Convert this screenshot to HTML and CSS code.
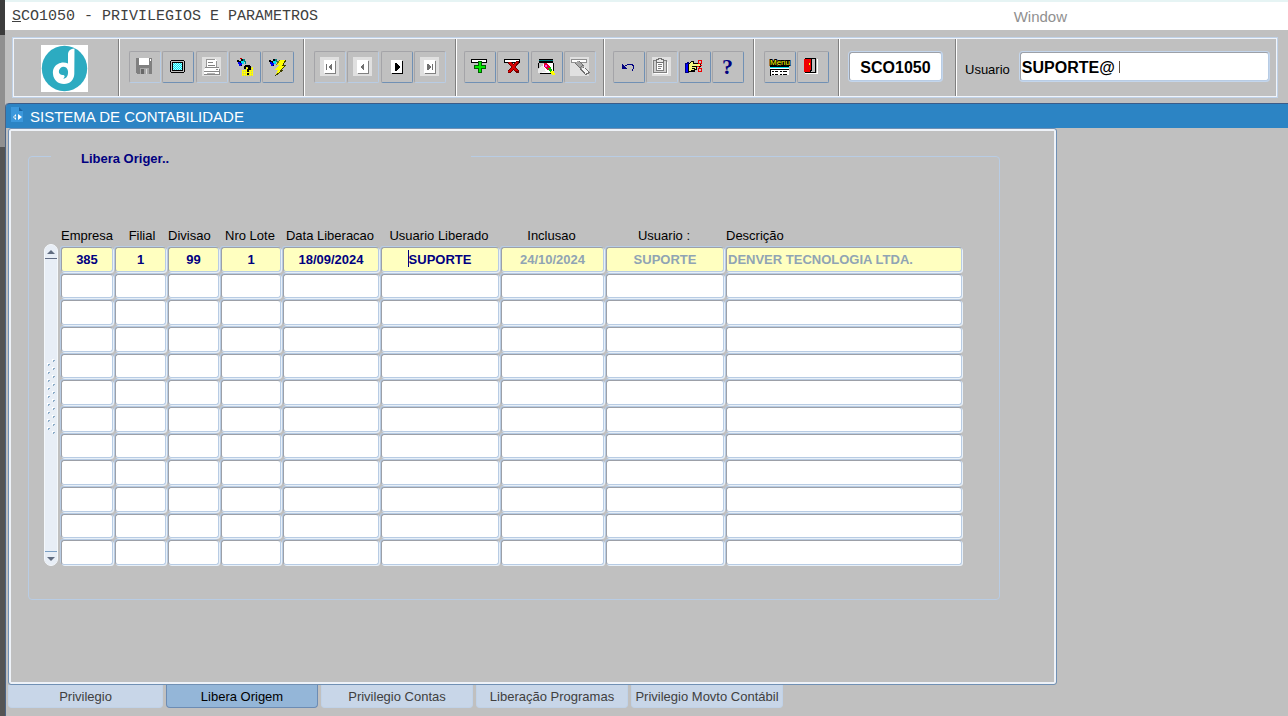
FILE: index.html
```html
<!DOCTYPE html>
<html lang="pt-BR">
  <head>
    <meta charset="utf-8">
    <title>SCO1050 - PRIVILEGIOS E PARAMETROS</title>
    <link rel="stylesheet" href="styles.css">
  </head>
  <body>
    <div class="edge"></div>
    <div class="page">
      <header class="menubar">
        <a class="menu-title" href="#"><u>S</u>CO1050 - PRIVILEGIOS E PARAMETROS</a>
        <a class="menu-window" href="#">Window</a>
      </header>

      <div class="toolbar">
        <div class="cell cell-logo">
          <svg class="logo" viewBox="0 0 47 47" role="img" aria-label="Denver">
            <rect width="47" height="47" fill="#fff"/>
            <circle cx="23.5" cy="23.5" r="22.7" fill="#2cabc1"/>
            <path d="M33.5 3.5 C28 4 27 7 27 10 V18.5 C24 17 20 17 17 19 C13 21 11.5 25 12 29 C12.5 35 17 39 23 39 C29 39 33 35 33.3 29 Z" fill="#fff"/>
            <path d="M27 26 C26.500 22 22 20.500 19.500 23 C16.500 26 18 30 21.500 30 C24 30 24.500 32 22 33.500 C25 34 27.500 31 27 26 Z" fill="#2cabc1"/>
          </svg>
        </div>

        <div class="cell group group-5">
          <button class="tool off" aria-label="Salvar">
            <svg viewBox="0 0 29 29">
              <path d="M6 5H22V21H7L6 20Z" fill="#808080"/>
              <path d="M9 5H19V12H9Z" fill="#fff"/>
              <path d="M20 6H21V8H20Z" fill="#fff"/>
              <path d="M10 15H19V21H10Z" fill="#a8a8a8"/>
              <path d="M11 16H14V21H11Z" fill="#686868"/>
              <path d="M16 16H17V21H16Z" fill="#d8d8d8"/>
            </svg>
          </button>
          <button class="tool" aria-label="Tela">
            <svg viewBox="0 0 29 29">
              <path d="M8 7H21V8H22V19H21V20H8V19H7V8H8Z" fill="#000"/>
              <path d="M8 8H21V19H8Z" fill="#c0c0c0"/>
              <path d="M9 9H20V18H9Z" fill="#000"/>
              <path d="M10 10H19V17H10Z" fill="#00e4f4"/>
              <path d="M10 10.500H19M10 12.500H19M10 14.500H19M10 16.500H19" stroke="#b8ffff" stroke-dasharray="1 1"/>
              <path d="M11 11.500H19M11 13.500H19M11 15.500H19" stroke="#b8ffff" stroke-dasharray="1 1"/>
            </svg>
          </button>
          <button class="tool off" aria-label="Imprimir">
            <svg viewBox="0 0 29 29">
              <path d="M5 4H24V23H5Z" fill="#e0e0e0"/>
              <path d="M10 6H18L20 8V14H9V7Z" fill="#fff"/>
              <path d="M9.500 14V6.500H18M19.500 8V14" stroke="#989898" fill="none"/>
              <path d="M11 9.500H16M11 12.500H18" stroke="#808080"/>
              <path d="M7 16L9 14H20L23 16V22H7Z" fill="#fff"/>
              <path d="M8 14.500H22M7 18.500H23M7 21.500H23M22.500 16V22M19 16.500H21" stroke="#888"/>
              <path d="M10 20.500H18" stroke="#b0b0b0"/>
            </svg>
          </button>
          <button class="tool" aria-label="Entrar consulta">
            <svg viewBox="0 0 29 29">
              <path d="M7 7H9V8H11V6H13V8H14V11H12V13H9V11H8V9H7Z" fill="#000"/>
              <path d="M8 9H10V10H12V12H11V13H9V11H8Z" fill="#0000f0"/>
              <path d="M11 8H14V11H12V10H11Z" fill="#00e0f0"/>
              <path d="M13 6H15V8H16V11H15V9H14V8H13Z" fill="#008080"/>
              <path d="M10 5H12V6H10Z" fill="#c00000"/>
              <path d="M15 13H21V14H23V23H12V17H15Z" fill="#ffff00"/>
              <path d="M13 14.500H23M13 16.500H23M13 18.500H23M13 20.500H23M13 22.500H23" stroke="#c0c080" stroke-dasharray="1 1"/>
              <path d="M15 12H20V13H21V17H19V19H17V16H18V14H16V16H14V13H15ZM17 20H19V22H17Z" fill="#000"/>
            </svg>
          </button>
          <button class="tool" aria-label="Executar consulta">
            <svg viewBox="0 0 29 29">
              <path d="M6 7H8V8H10V6H12V8H13V11H11V13H8V11H7V9H6Z" fill="#000"/>
              <path d="M7 9H9V10H11V12H10V13H8V11H7Z" fill="#0000f0"/>
              <path d="M10 8H13V11H11V10H10Z" fill="#00e0f0"/>
              <path d="M12 6H14V8H15V11H14V9H13V8H12Z" fill="#008080"/>
              <path d="M17 7H23L20 12H23L18 17H20L12 23L15 17H12L16 12H14Z" fill="#ffff00"/>
              <path d="M23 7L20 12H23L18 17H20L12 23" fill="none" stroke="#404000"/>
              <path d="M17 7L13 12" fill="none" stroke="#808000"/>
            </svg>
          </button>
        </div>

        <div class="cell group group-4">
          <button class="tool off" aria-label="Primeiro">
            <svg viewBox="0 0 29 29">
              <path d="M5 4H24V23H5Z" fill="#e0e0e0"/>
              <path d="M10 8H21V21H10Z" fill="#808080"/>
              <path d="M9 7H20V20H9Z" fill="#fff"/>
              <path d="M11 11H12V17H11ZM17 11V17H16L13 14L16 11Z" fill="#707070"/>
            </svg>
          </button>
          <button class="tool off" aria-label="Anterior">
            <svg viewBox="0 0 29 29">
              <path d="M5 4H24V23H5Z" fill="#e0e0e0"/>
              <path d="M10 8H21V21H10Z" fill="#808080"/>
              <path d="M9 7H20V20H9Z" fill="#fff"/>
              <path d="M16 10V18L12 14Z" fill="#707070"/>
            </svg>
          </button>
          <button class="tool" aria-label="Próximo">
            <svg viewBox="0 0 29 29">
              <path d="M10 8H21V21H10Z" fill="#000"/>
              <path d="M9 7H20V20H9Z" fill="#fff"/>
              <path d="M13 10H14L18 14L14 18H13Z" fill="#000"/>
            </svg>
          </button>
          <button class="tool off" aria-label="Último">
            <svg viewBox="0 0 29 29">
              <path d="M5 4H24V23H5Z" fill="#e0e0e0"/>
              <path d="M10 8H21V21H10Z" fill="#808080"/>
              <path d="M9 7H20V20H9Z" fill="#fff"/>
              <path d="M17 11H18V17H17ZM12 11V17H13L16 14L13 11Z" fill="#707070"/>
            </svg>
          </button>
        </div>

        <div class="cell group group-4 tight">
          <button class="tool" aria-label="Inserir registro">
            <svg viewBox="0 0 29 29">
              <path d="M6.500 6.500H21.500V9.500H6.500Z" fill="#fff" stroke="#000"/>
              <path d="M13 8H17V12H21V16H17V20H13V16H9V12H13Z" fill="#006000"/>
              <path d="M14 9H16V13H20V15H16V19H14V15H10V13H14Z" fill="#00e800"/>
            </svg>
          </button>
          <button class="tool" aria-label="Excluir registro">
            <svg viewBox="0 0 29 29">
              <path d="M6.500 6.500H21.500V9.500H6.500Z" fill="#fff" stroke="#000"/>
              <path d="M10 9H13L15 11L18 8H21V10L18 14L21 18V20H18L15 17L12 20H10V17L13 14L10 11Z" fill="#700000"/>
              <path d="M11 9H13L15 12L18 9H20L17 14L20 18H18L15 16L12 19H10L14 14L11 11Z" fill="#d80000"/>
            </svg>
          </button>
          <button class="tool" aria-label="Limpar tela">
            <svg viewBox="0 0 29 29">
              <path d="M7 6H21V10H22V19H19V21H8V15H6V10H7Z" fill="#000"/>
              <path d="M7 7H21V8H7Z" fill="#008080"/>
              <path d="M8 10H21V18H18V20H8Z" fill="#fff"/>
              <path d="M7 10H12L8 18H6V15H7Z" fill="#c0c0c0"/>
              <path d="M6 20V17L10 12L13 16L14 19Z" fill="#e8e8e8"/>
              <path d="M12 10H15L18 14V17H15L12 14Z" fill="#e00030"/>
              <path d="M13 12H15V14H13Z" fill="#ff40ff"/>
              <path d="M16 15L19 14L20 18L18 19Z" fill="#00c000"/>
              <path d="M19 18L22 18L23 22L20 22L18 20Z" fill="#ffff00"/>
            </svg>
          </button>
          <button class="tool off" aria-label="Limpar registro">
            <svg viewBox="0 0 29 29">
              <path d="M5 4H24V23H5Z" fill="#e0e0e0"/>
              <path d="M6.500 6.500H21.500V9.500H6.500Z" fill="#fff" stroke="#909090"/>
              <path d="M12 9L23 21" stroke="#707070" stroke-width="5"/>
              <path d="M12 9L18 15" stroke="#a8a8a8" stroke-width="3"/>
              <path d="M18 15L22 20" stroke="#f4f4f4" stroke-width="3"/>
              <path d="M15 15L18 12" stroke="#707070"/>
            </svg>
          </button>
        </div>

        <div class="cell group group-4 undo-group">
          <button class="tool" aria-label="Desfazer">
            <svg viewBox="0 0 29 29">
              <path d="M8 11H9V12H10V13H11V14H12V15H13V16H8Z" fill="#000080"/>
              <path d="M11 13L14 11.500H18L19.500 13V15L18 17.500" fill="none" stroke="#000080"/>
            </svg>
          </button>
          <button class="tool off" aria-label="Colar">
            <svg viewBox="0 0 29 29">
              <path d="M5 4H24V23H5Z" fill="#e0e0e0"/>
              <path d="M6.500 7.500H19.500V19.500H6.500Z" fill="#d0d0d0" stroke="#808080"/>
              <path d="M9.500 9.500H16.500V17.500H9.500Z" fill="#fff" stroke="#808080"/>
              <path d="M9.500 6.500H11.500V5.500H14.500V6.500H16.500V9.500H9.500Z" fill="#e8e8e8" stroke="#707070"/>
              <path d="M11 11.500H15M11 13.500H15M11 15.500H14" stroke="#808080"/>
              <path d="M7 20.500H20.500V9" fill="none" stroke="#fff"/>
            </svg>
          </button>
          <button class="tool" aria-label="Recortar">
            <svg viewBox="0 0 29 29">
              <path d="M5 10H7V9H8V19H5Z" fill="#0000ff" stroke="#000080"/>
              <path d="M8.500 11.500L11.500 8.500H13.500V10.500H20.500V13.500H16.500V16.500H14.500V18.500H8.500Z" fill="#f4f480" stroke="#000"/>
              <path d="M12 13.500H17M12 15.500H15M11 17.500H14" stroke="#000"/>
              <path d="M18.500 7.500H21.500V10.500H18.500ZM18.500 15.500H21.500V18.500H18.500Z" fill="none" stroke="#f00000"/>
              <path d="M17 13.500H19M19 14.500H20M20 12.500H22" stroke="#f00000"/>
            </svg>
          </button>
          <button class="tool" aria-label="Ajuda">
            <svg viewBox="0 0 29 29"><text class="glyph-help" x="9" y="21">?</text></svg>
          </button>
        </div>

        <div class="cell group group-2">
          <button class="tool" aria-label="Menu">
            <svg viewBox="0 0 29 29">
              <path d="M5 15H24V22H5Z" fill="#fff"/>
              <path d="M5 13.500H24M5 16.500H24M5.500 16V23" stroke="#000"/>
              <path d="M5 14.500H24" stroke="#00e0f0"/>
              <path d="M7 18.500H9M10 18.500H13M15 18.500H17M18 18.500H22M7 21.500H9M10 21.500H13M15 21.500H17M18 21.500H22" stroke="#000"/>
              <text class="glyph-menu" x="5" y="12">Menu</text>
            </svg>
          </button>
          <button class="tool" aria-label="Sair">
            <svg viewBox="0 0 29 29">
              <path d="M7 20H19V6H20V21H7Z" fill="#fff"/>
              <path d="M7.500 5.500H17.500V19.500H7.500Z" fill="#c0c0c0" stroke="#000"/>
              <path d="M6 6H13V17H12V19H6Z" fill="#f00000"/>
              <path d="M13.500 6V17L12.500 18V20" stroke="#000" fill="none"/>
              <path d="M11 10H12V12H11Z" fill="#ffff00"/>
            </svg>
          </button>
        </div>

        <div class="cell cell-code">
          <input class="big-field code" type="text" value="SCO1050" aria-label="Programa">
        </div>
        <div class="cell cell-user">
          <label for="usuario">Usuario</label>
          <input class="big-field user" id="usuario" type="text" value="SUPORTE@">
        </div>
      </div>

      <main class="window">
        <h1 class="window-title">
          <svg class="doc" viewBox="0 0 14 16" aria-hidden="true">
            <path d="M1 0H9L13 4V15H1Z" fill="#3c98dc"/>
            <path d="M9 0V4H13Z" fill="#1c64a0"/>
            <path d="M3 10L6 7V13ZM8 7L12 10L8 13Z" fill="#fff"/>
            <path d="M4 10H6" stroke="#2c84c4"/>
          </svg>
          SISTEMA DE CONTABILIDADE
        </h1>

        <section class="panel">
          <fieldset class="frame">
            <legend>Libera Origer..</legend>
            <div class="block">
              <div class="scroll">
                <button class="scroll-end up" aria-label="Subir">
                  <svg viewBox="0 0 8 4"><path d="M4 0L8 4H0Z" fill="#606c80"/></svg>
                </button>
                <div class="track">
                  <svg class="grip" viewBox="0 0 8 76" aria-hidden="true">
                    <defs>
                      <pattern id="dots" width="8" height="8" patternUnits="userSpaceOnUse">
                        <path d="M5 0H7V1H6V2H5ZM0 4H2V5H1V6H0Z" fill="#fff"/>
                        <path d="M6 1H8V2H7V3H6ZM1 5H3V6H2V7H1Z" fill="#8cacc8"/>
                      </pattern>
                    </defs>
                    <rect width="8" height="76" fill="url(#dots)"/>
                  </svg>
                </div>
                <button class="scroll-end down" aria-label="Descer">
                  <svg viewBox="0 0 8 4"><path d="M0 0H8L4 4Z" fill="#606c80"/></svg>
                </button>
              </div>

              <table class="grid">
                <colgroup>
                  <col class="w-empresa"><col class="w-small"><col class="w-small">
                  <col class="w-lote"><col class="w-data"><col class="w-user">
                  <col class="w-inclusao"><col class="w-user"><col class="w-desc">
                </colgroup>
                <thead>
                  <tr>
                    <th class="left">Empresa</th>
                    <th class="near">Filial</th>
                    <th class="left">Divisao</th>
                    <th>Nro Lote</th>
                    <th>Data Liberacao</th>
                    <th>Usuario Liberado</th>
                    <th>Inclusao</th>
                    <th>Usuario :</th>
                    <th class="left">Descrição</th>
                  </tr>
                </thead>
                <tbody id="rows">
                  <tr class="current">
                    <td><input type="text" value="385" aria-label="Empresa"></td>
                    <td><input type="text" value="1" aria-label="Filial"></td>
                    <td><input type="text" value="99" aria-label="Divisao"></td>
                    <td><input type="text" value="1" aria-label="Nro Lote"></td>
                    <td><input type="text" value="18/09/2024" aria-label="Data Liberacao"></td>
                    <td><input class="caret" type="text" value="SUPORTE" aria-label="Usuario Liberado"></td>
                    <td><input class="locked" type="text" value="24/10/2024" aria-label="Inclusao" readonly></td>
                    <td><input class="locked" type="text" value="SUPORTE" aria-label="Usuario" readonly></td>
                    <td><input class="locked desc" type="text" value="DENVER TECNOLOGIA LTDA." aria-label="Descrição" readonly></td>
                  </tr>
                </tbody>
              </table>
            </div>
          </fieldset>
        </section>

        <nav class="tabs">
          <button class="tab first">Privilegio</button>
          <button class="tab active">Libera Origem</button>
          <button class="tab">Privilegio Contas</button>
          <button class="tab">Liberação Programas</button>
          <button class="tab">Privilegio Movto Contábil</button>
        </nav>
      </main>
    </div>
    <script src="rows.js"></script>
  </body>
</html>
```

FILE: styles.css
```css
* { box-sizing: border-box; }

body {
  margin: 0;
  min-height: 100vh;
  display: flex;
  background: #c0c0c0;
  font-family: "Liberation Sans", Arial, sans-serif;
  font-size: 13px;
  color: #000;
}

button, input { font: inherit; margin: 0; padding: 0; }
a { color: inherit; text-decoration: none; }
svg { display: block; }

.edge {
  flex: none;
  width: 5px;
  background: linear-gradient(#3c3c3c 35px, #909090 35px, #909090 147px, #545454 147px);
}

.page { flex: 1; min-width: 0; display: flex; flex-direction: column; }

/* menu bar */
.menubar {
  display: flex;
  justify-content: space-between;
  align-items: center;
  height: 30px;
  padding: 1px 221px 0 7px;
  border-top: 2px solid #e6f4f4;
  background: #fff;
}
.menu-title { font: 15px "Liberation Mono", "Courier New", monospace; color: #404040; }
.menu-window { font-size: 15px; color: #909090; }

/* toolbar */
.toolbar {
  display: flex;
  height: 61px;
  margin: 7px 10px 5px 7px;
  border: 1px solid #c0d2e8;
  box-shadow: inset 0 0 0 1px #f0f4fa;
  padding: 1px;
}
.cell {
  flex: none;
  border-right: 1px solid #fff;
  box-shadow: inset -1px 0 #808080;
}
.cell-logo { width: 106px; padding: 6px 0 0 27px; }
.logo { width: 47px; height: 47px; }

.group { display: flex; justify-content: space-between; padding: 12px 10px 0 9px; }
.group-5 { width: 185px; }
.group-4 { width: 152px; }
.group-4.tight { width: 148px; padding: 12px 8px 0 7px; }
.group-4.undo-group { width: 150px; padding: 12px 10px 0 8px; }
.group-2 { width: 85px; }

.tool {
  width: 32px;
  height: 32px;
  border: 1px solid;
  border-color: #a4a4a8 #7090b4 #7090b4 #a4a4a8;
  border-radius: 2px;
  background: none;
}
.tool.off { border-color: #a4a4a8 #b8cce4 #b8cce4 #a4a4a8; }
.tool svg { width: 29px; height: 29px; shape-rendering: crispEdges; }
.glyph-help { font: bold 22px "Liberation Serif", serif; fill: #000080; }
.glyph-menu {
  font: 8px "Liberation Sans", Arial, sans-serif;
  fill: #ffff00;
  stroke: #000;
  stroke-width: 2px;
  paint-order: stroke;
}

.big-field {
  height: 29px;
  padding: 2px 1px 0;
  border: 1px solid;
  border-color: #9ca0a8 #b8cce4 #b8cce4 #9ca0a8;
  border-radius: 3px;
  box-shadow: 0 0 0 1px #c4d6ec;
  background: #fff;
  font-size: 16px;
  font-weight: bold;
}
.cell-code { width: 117px; padding: 13px 14px 0 9px; }
.code { width: 93px; text-align: center; }
.cell-user {
  flex: 1;
  min-width: 0;
  display: flex;
  align-items: flex-start;
  gap: 10px;
  padding: 13px 7px 0 8px;
  border: 0;
  box-shadow: none;
}
.cell-user label { line-height: 35px; }
.user {
  flex: 1;
  min-width: 0;
  background: linear-gradient(#605040, #605040) no-repeat 98px 8px / 1px 12px #fff;
}

/* inner window */
.window { flex: 1; border-left: 1px solid #4c6484; border-top-left-radius: 4px; }
.window-title {
  display: flex;
  align-items: center;
  gap: 6px;
  height: 25px;
  margin: 0;
  padding: 0 0 0 4px;
  border-top: 1px solid #3c5c88;
  border-top-left-radius: 4px;
  background: #2c84c4;
  color: #fff;
  font-size: 15px;
  font-weight: normal;
}
.doc { width: 14px; height: 16px; margin-top: -2px; }

.panel {
  width: max-content;
  margin-left: 2px;
  padding: 18px 56px 84px 19px;
  border: 1px solid #7090b4;
  border-radius: 3px;
  box-shadow: inset 0 0 0 2px #eef2f8;
}
.frame {
  min-width: 0;
  margin: 0;
  padding: 62px 36px 33px 15px;
  border: 1px solid #b8cce4;
  border-radius: 4px;
}
.frame legend {
  width: 420px;
  margin-left: 7px;
  padding: 4px 0 0 30px;
  line-height: 15px;
  color: #000080;
  font-weight: bold;
}

.block { display: flex; gap: 2px; align-items: stretch; }

.scroll {
  display: flex;
  flex-direction: column;
  width: 14px;
  margin-top: 16px;
  border: 1px solid #f4f8fc;
  border-radius: 7px;
  background: #e8eef6;
}
.scroll-end {
  display: flex;
  justify-content: center;
  align-items: center;
  height: 14px;
  border: 0;
  background: none;
}
.scroll-end.up { border-bottom: 1px solid #606c84; }
.scroll-end.down { border-top: 1px solid #7ca0c4; }
.scroll-end svg { width: 8px; height: 4px; }
.track { flex: 1; display: flex; justify-content: center; align-items: center; padding-bottom: 16px; }
.grip { width: 8px; height: 76px; shape-rendering: crispEdges; }

/* record grid */
.grid { width: 903px; height: 338px; border-collapse: collapse; table-layout: fixed; }
.w-empresa { width: 54px; }
.w-small { width: 53px; }
.w-lote { width: 62px; }
.w-data { width: 98px; }
.w-user { width: 120px; }
.w-inclusao { width: 105px; }
.w-desc { width: 238px; }

.grid th {
  height: 18px;
  padding: 0 2px 3px 0;
  font-weight: normal;
  line-height: 15px;
  white-space: nowrap;
}
.grid th.left { padding-left: 1px; text-align: left; }
.grid th.near { padding-left: 5px; }
.grid td { height: 26px; padding: 1px; }
.grid input {
  display: block;
  width: 100%;
  height: 100%;
  min-height: 24px;
  padding: 0 1px;
  border: 1px solid;
  border-color: #9ca0a8 #b8cce4 #b8cce4 #9ca0a8;
  border-radius: 3px;
  box-shadow: 1px 1px #e8f0f8, -1px -1px #b8cce4;
  background-color: #fff;
  color: #000080;
  font-weight: bold;
  text-align: center;
}
.grid .current input { background-color: #ffffc0; }
.grid .current input.locked { color: #90a4b4; }
.grid input.desc { text-align: left; }
.grid input.caret {
  background-image: linear-gradient(#000080, #000080);
  background-repeat: no-repeat;
  background-position: 26px 2px;
  background-size: 1px 17px;
}

/* canvas tabs */
.tabs { display: flex; gap: 3px; margin-left: 2px; }
.tab {
  width: 152px;
  height: 23px;
  border: 1px solid #c0d2e8;
  border-top: 0;
  border-radius: 0 0 4px 4px;
  background: #c8d6e8;
  color: #404040;
  white-space: nowrap;
}
.tab.first { width: 155px; }
.tab.active { border-color: #6c8cb4; background: #94b6d8; color: #000; }
```

FILE: rows.js
```js
// fill the block up to 12 visible records
const body = document.getElementById("rows");
const names = [...body.querySelectorAll("input")].map((i) => i.getAttribute("aria-label"));

for (let n = 2; n <= 12; n++) {
  const tr = body.insertRow();
  for (const name of names) {
    const input = document.createElement("input");
    input.type = "text";
    input.setAttribute("aria-label", name + " " + n);
    tr.insertCell().append(input);
  }
}
```
